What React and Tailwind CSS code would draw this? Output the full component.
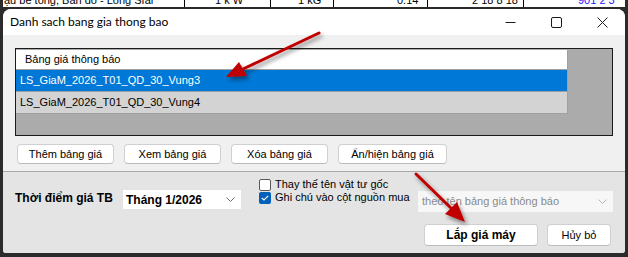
import React from "react";

const Btn = ({ w, children, bold }) => (
  <div
    className={`h-full ${w} flex items-center justify-center bg-white border border-[#d0d0d0] border-b-[#bcbcbc] rounded-[4px] text-[11px] text-black ${bold ? "font-bold text-[12px]" : ""}`}
  >
    {children}
  </div>
);

const Chevron = ({ color = "#6e6e6e" }) => (
  <svg width="9" height="5" viewBox="0 0 9 5" className="shrink-0">
    <path d="M0.5 0.5 L4.5 4.5 L8.5 0.5" fill="none" stroke={color} strokeWidth="1" />
  </svg>
);

export default function App() {
  return (
    <div
      className="relative w-[628px] h-[257px] bg-[#2b2b2b] overflow-hidden flex flex-col"
      style={{ fontFamily: '"Liberation Sans", Arial, sans-serif' }}
    >
      {/* background spreadsheet strip */}
      <div className="mx-[3px] h-[7px] bg-white overflow-hidden flex text-[11px] leading-[11px] text-black shrink-0">
        <div className="w-[182px] border-r border-black -mt-[5px] pl-[1px] whitespace-nowrap overflow-hidden">ạu bê tông, Bản đồ - Long Sfar</div>
        <div className="w-[86px] border-r border-black -mt-[5px] pl-[30px] whitespace-nowrap">1 k W</div>
        <div className="w-[63px] border-r border-black -mt-[5px] pl-[27px] whitespace-nowrap">1 kG</div>
        <div className="w-[94px] border-r border-black -mt-[5px] pl-[63px] whitespace-nowrap">0.14</div>
        <div className="w-[96px] border-r border-black -mt-[5px] pl-[44px] whitespace-nowrap">2 18 8 18</div>
        <div className="flex-1 -mt-[5px] pl-[54px] whitespace-nowrap text-[#1a1aff]">901 2 3</div>
      </div>

      {/* window */}
      <div className="mt-[2px] mx-[3px] w-[622px] h-[244px] rounded-t-[8px] rounded-b-[3px] overflow-hidden flex flex-col bg-[#f0f0f0]">
        {/* title bar */}
        <div className="h-[26px] bg-white flex items-center shrink-0">
          <div
            className="pl-[7px] flex-1 text-[12px] text-black"
            style={{ fontFamily: 'Lato, "Liberation Sans", sans-serif' }}
          >
            Danh sach bang gia thong bao
          </div>
          <div className="w-[46px] h-full flex items-center justify-center">
            <svg width="11" height="11" viewBox="0 0 11 11">
              <path d="M0.5 5.5 H10.5" stroke="#1a1a1a" strokeWidth="1" />
            </svg>
          </div>
          <div className="w-[46px] h-full flex items-center justify-center">
            <svg width="11" height="11" viewBox="0 0 11 11">
              <rect x="0.5" y="0.5" width="10" height="10" rx="1.5" fill="none" stroke="#1a1a1a" strokeWidth="1" />
            </svg>
          </div>
          <div className="w-[46px] h-full flex items-center justify-center">
            <svg width="11" height="11" viewBox="0 0 11 11">
              <path d="M0.5 0.5 L10.5 10.5 M10.5 0.5 L0.5 10.5" stroke="#1a1a1a" strokeWidth="1" />
            </svg>
          </div>
        </div>

        {/* upper section */}
        <div className="h-[136px] shrink-0 flex flex-col pl-[12px]">
          <div className="mt-[13px] w-[598px] h-[88px] border border-[#1a1a1a] bg-[#ababab] pt-[1px]">
            <div className="w-[552px] border-r border-[#a0a0a0] text-[11px]">
              <div className="h-[20px] bg-white border-b border-[#a0a0a0] flex items-center pl-[9px] text-black">
                Bảng giá thông báo
              </div>
              <div className="h-[22px] bg-[#0078d7] border-b border-[#a0a0a0] flex items-center pl-[4px] text-white">
                LS_GiaM_2026_T01_QD_30_Vung3
              </div>
              <div className="h-[22px] bg-[#d3d3d3] border-b border-[#a0a0a0] flex items-center pl-[4px] text-black">
                LS_GiaM_2026_T01_QD_30_Vung4
              </div>
            </div>
          </div>
          <div className="mt-[8px] ml-[2px] h-[20px] flex gap-[10px]">
            <Btn w="w-[97px]">Thêm bảng giá</Btn>
            <Btn w="w-[97px]">Xem bảng giá</Btn>
            <Btn w="w-[97px]">Xóa bảng giá</Btn>
            <Btn w="w-[109px]">Ẩn/hiện bảng giá</Btn>
          </div>
        </div>

        {/* lower section */}
        <div className="flex-1 border-t border-[#a8a8a8] bg-[#e4e4e4] flex flex-col pt-[6px]">
          <div className="h-[36px] flex items-start pl-[12px]">
            <div className="w-[107px] mt-[12px] text-[12px] leading-[16px] font-bold text-black whitespace-nowrap">
              Thời điểm giá TB
            </div>
            <div className="w-[120px] h-[21px] mt-[11px] bg-white border border-[#e2e2e2] flex items-center pl-[3px] pr-[6px]">
              <span className="flex-1 text-[12px] font-bold text-black">Tháng 1/2026</span>
              <Chevron />
            </div>
            <div className="w-[159px] ml-[17px] flex flex-col text-[11px] text-black">
              <div className="h-[13px] flex items-center gap-[4px]">
                <div className="w-[12px] h-[12px] rounded-[2px] border border-[#5a5a5a] bg-white shrink-0" />
                <span className="whitespace-nowrap leading-[13px]">Thay thế tên vật tư gốc</span>
              </div>
              <div className="h-[13px] flex items-center gap-[4px]">
                <div className="w-[12px] h-[12px] rounded-[2px] bg-[#005fb8] flex items-center justify-center shrink-0">
                  <svg width="8" height="6" viewBox="0 0 8 6">
                    <path d="M0.8 3 L3 5 L7.2 0.8" fill="none" stroke="white" strokeWidth="1.1" />
                  </svg>
                </div>
                <span className="whitespace-nowrap leading-[13px]">Ghi chú vào cột nguồn mua</span>
              </div>
            </div>
            <div className="w-[195px] h-[21px] mt-[13px] bg-[#f7f7f7] flex items-center pl-[4px] pr-[6px]">
              <span className="flex-1 text-[11px] text-[#8a8a8a] whitespace-nowrap">theo tên bảng giá thông báo</span>
              <Chevron color="#b5b5b5" />
            </div>
          </div>
          <div className="mt-[10px] h-[22px] flex justify-end gap-[9px] pr-[14px]">
            <Btn w="w-[114px]" bold>Lắp giá máy</Btn>
            <Btn w="w-[64px]">Hủy bỏ</Btn>
          </div>
        </div>
      </div>

      {/* red arrows overlay */}
      <svg className="absolute inset-0 pointer-events-none" width="628" height="257" viewBox="0 0 628 257">
        <defs>
          <filter id="sh" x="-20%" y="-20%" width="140%" height="140%">
            <feDropShadow dx="2" dy="3" stdDeviation="2" floodColor="#000" floodOpacity="0.45" />
          </filter>
        </defs>
        <g filter="url(#sh)" fill="#c00000" stroke="#c00000">
          <path d="M319 33 L243 69" strokeWidth="3" strokeLinecap="round" fill="none" />
          <path d="M226 77 L239 62 L247 76 Z" stroke="none" />
          <path d="M416 174 L452 209" strokeWidth="3" strokeLinecap="round" fill="none" />
          <path d="M465 222 L445 214 L457 202 Z" stroke="none" />
        </g>
      </svg>
    </div>
  );
}
